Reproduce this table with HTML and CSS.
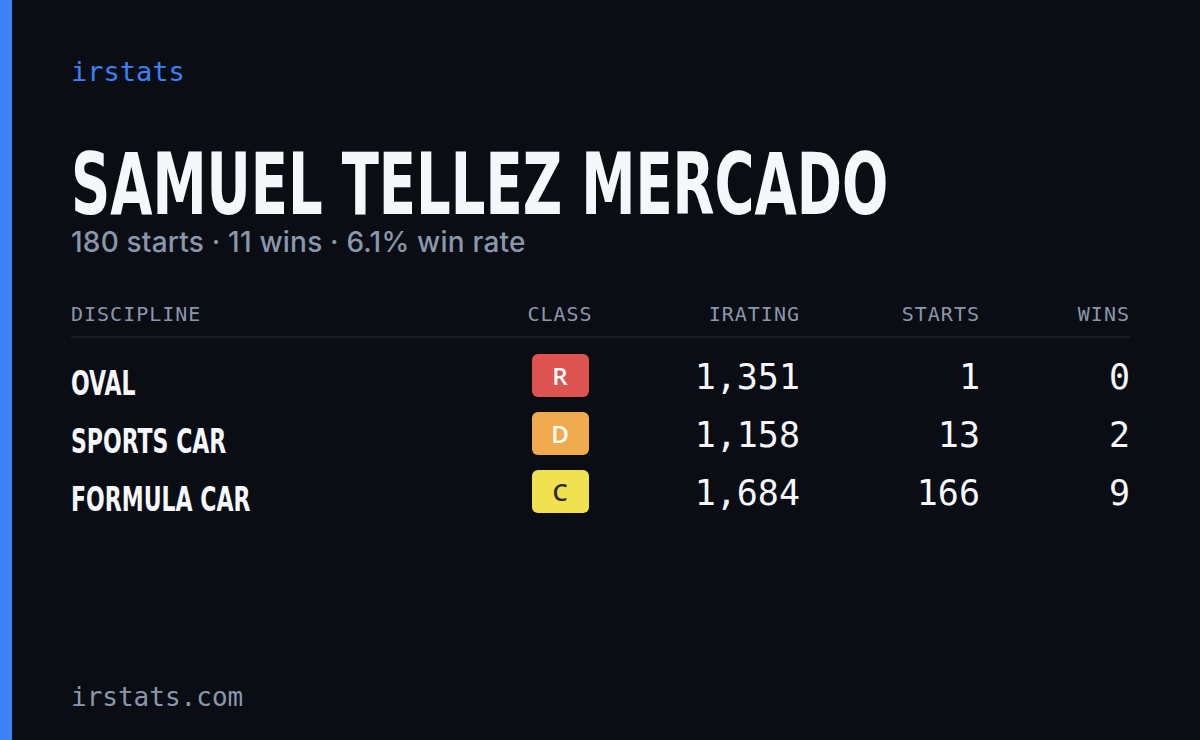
FILE: index.html
```html
<!DOCTYPE html>
<html>
<head>
<meta charset="utf-8">
<link rel="stylesheet" href="styles.css">
</head>
<body>
<div class="card">
  <div class="accent"></div>
  <main class="content">
    <div class="logo">irstats</div>
    <h1 class="name"><span class="squeeze">SAMUEL TELLEZ MERCADO</span></h1>
    <p class="summary">180 starts · 11 wins · 6.1% win rate</p>
    <div class="table">
      <div class="row head">
        <div class="c-disc">DISCIPLINE</div>
        <div class="c-class">CLASS</div>
        <div class="c-num">IRATING</div>
        <div class="c-num">STARTS</div>
        <div class="c-num">WINS</div>
      </div>
      <div class="row">
        <div class="c-disc label"><span class="squeeze">OVAL</span></div>
        <div class="c-class"><span class="badge r">R</span></div>
        <div class="c-num val">1,351</div>
        <div class="c-num val">1</div>
        <div class="c-num val">0</div>
      </div>
      <div class="row">
        <div class="c-disc label"><span class="squeeze">SPORTS CAR</span></div>
        <div class="c-class"><span class="badge d">D</span></div>
        <div class="c-num val">1,158</div>
        <div class="c-num val">13</div>
        <div class="c-num val">2</div>
      </div>
      <div class="row">
        <div class="c-disc label"><span class="squeeze">FORMULA CAR</span></div>
        <div class="c-class"><span class="badge c">C</span></div>
        <div class="c-num val">1,684</div>
        <div class="c-num val">166</div>
        <div class="c-num val">9</div>
      </div>
    </div>
    <div class="footer">irstats.com</div>
  </main>
</div>
</body>
</html>
```
FILE: styles.css
```css
html, body {
  margin: 0;
  padding: 0;
  background: #0a0d14;
}
.card {
  display: flex;
  width: 1200px;
  height: 740px;
  background: #0a0d14;
  overflow: hidden;
}
.accent {
  width: 12px;
  flex: none;
  background: #3b82f6;
}
.content {
  flex: 1;
  min-width: 0;
  display: flex;
  flex-direction: column;
  padding: 54px 70px 0 59px;
}
.logo {
  font-family: "DejaVu Sans Mono", monospace;
  font-size: 27px;
  line-height: 36px;
  color: #3b82f6;
}
.name {
  margin: 61px 0 0;
  font-family: "DejaVu Sans Condensed", "DejaVu Sans", sans-serif;
  font-weight: bold;
  font-size: 86px;
  line-height: 66px;
  color: #f5f7fb;
  white-space: nowrap;
  min-width: 0;
}
.name .squeeze {
  transform: scaleX(0.704);
}
.squeeze {
  display: inline-block;
  transform: scaleX(0.72);
  transform-origin: left center;
  white-space: nowrap;
}
.summary {
  margin: 7px 0 0;
  font-family: Inter, sans-serif;
  font-weight: 500;
  font-size: 28px;
  letter-spacing: 0.2px;
  line-height: 36px;
  color: #8a97ab;
}
.table {
  margin-top: 42px;
  display: flex;
  flex-direction: column;
}
.row {
  display: grid;
  grid-template-columns: 1fr 80px 200px 180px 150px;
  align-items: center;
  height: 58px;
}
.row.head {
  height: 34px;
  align-items: start;
  border-bottom: 2px solid #161b26;
  margin-bottom: 8px;
  font-family: "DejaVu Sans Mono", monospace;
  font-size: 20px;
  letter-spacing: 1px;
  color: #8a97ab;
}
.c-class {
  text-align: center;
}
.c-num {
  text-align: right;
}
.label {
  font-family: "DejaVu Sans Condensed", "DejaVu Sans", sans-serif;
  font-weight: bold;
  font-size: 34px;
  color: #f5f7fb;
  padding-top: 16px;
}
.val {
  font-family: "DejaVu Sans Mono", monospace;
  font-size: 35px;
  color: #f5f7fb;
  padding-top: 4px;
}
.badge {
  display: inline-flex;
  align-items: center;
  justify-content: center;
  width: 57px;
  height: 43px;
  border-radius: 6px;
  font-family: "Open Sans", sans-serif;
  font-weight: 600;
  font-size: 24px;
  color: #ffffff;
}
.badge.r { background: #dc5350; }
.badge.d { background: #efab4e; }
.badge.c { background: #efe150; color: #2c2c2c; }
.footer {
  margin-top: auto;
  margin-bottom: 25px;
  font-family: "DejaVu Sans Mono", monospace;
  font-size: 26px;
  line-height: 36px;
  color: #8a97ab;
}
```
